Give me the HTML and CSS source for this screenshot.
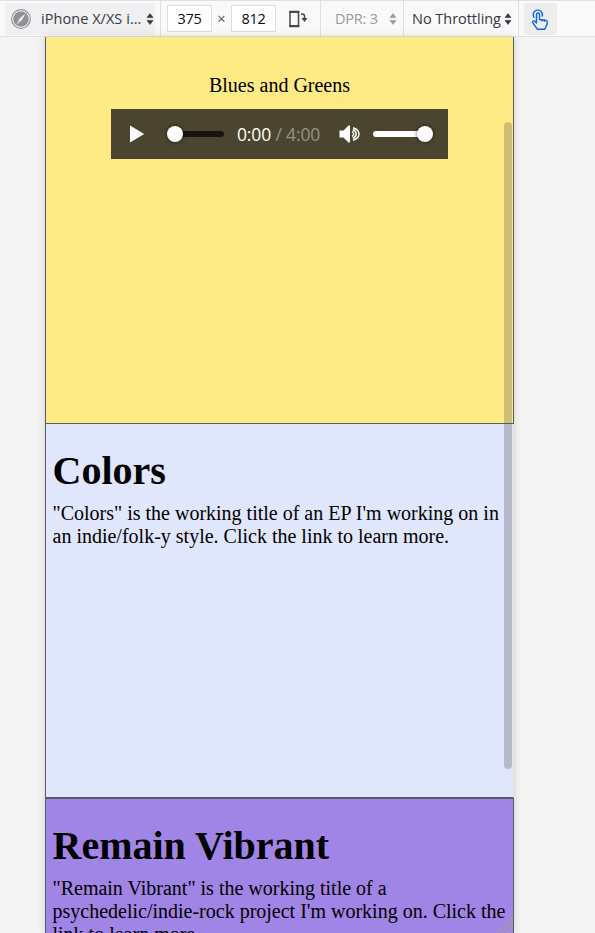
FILE: index.html
```html
<!DOCTYPE html>
<html lang="en">
<head>
<meta charset="utf-8">
<title>Responsive view</title>
<link rel="stylesheet" href="styles.css">
</head>
<body>
<header class="toolbar">
  <div class="cell device">
    <button class="device-button">
      <svg class="compass" width="20" height="20" viewBox="0 0 20 20"><circle cx="10" cy="10" r="9.3" fill="#fff" stroke="#909095" stroke-width="1.200"/><circle cx="10" cy="10" r="7.800" fill="#909095"/><path d="M14.500 4.500 11 11 5.500 15.500 9 9Z" fill="#eee"/></svg>
      <span class="device-name">iPhone X/XS i...</span>
      <svg class="arrows" width="8" height="12" viewBox="0 0 8 12"><path d="M4 .6 7 4.600H1ZM4 11.400 1 7.400h6Z" fill="#38383d" stroke="#38383d" stroke-width=".6" stroke-linejoin="round"/></svg>
    </button>
  </div>
  <div class="cell size">
    <span class="field">375</span>
    <span class="times">×</span>
    <span class="field">812</span>
    <svg class="rotate" width="20" height="20" viewBox="0 0 20 20"><path d="M2 2.500h8.500v15H2Z" fill="none" stroke="#48484c" stroke-width="1.500"/><path d="M1.300 3h10M1.300 17h10" stroke="#48484c" stroke-width="2"/><path d="M13 5h1.200q2.300 0 2.300 2.300V9" fill="none" stroke="#48484c" stroke-width="1.500"/><path d="M13.500 9h6l-3 4Z" fill="#48484c"/></svg>
  </div>
  <div class="cell dpr">
    <span class="dpr-text">DPR: 3</span>
    <svg class="arrows" width="8" height="12" viewBox="0 0 8 12"><path d="M4 .6 7 4.600H1ZM4 11.400 1 7.400h6Z" fill="#9a9a9c" stroke="#9a9a9c" stroke-width=".6" stroke-linejoin="round"/></svg>
  </div>
  <div class="cell throttle">
    <span class="throttle-text">No Throttling</span>
    <svg class="arrows" width="8" height="12" viewBox="0 0 8 12"><path d="M4 .6 7 4.600H1ZM4 11.400 1 7.400h6Z" fill="#38383d" stroke="#38383d" stroke-width=".6" stroke-linejoin="round"/></svg>
  </div>
  <button class="touch">
    <svg width="18" height="22" viewBox="0 0 18 22" fill="none" stroke="#0a68e8" stroke-width="1.400" stroke-linecap="round" stroke-linejoin="round"><path d="M5.500 13V5.500a1.500 1.500 0 0 1 3 0V10.500l6.300.6q1.400.2 1.400 1.700V15L13.800 20.300H6.500L1.500 13.300q.3-2 2.200-1.100L5.500 14M11 11v1M13.500 11.200v1"/><path d="M2.900 8.200A4.600 4.600 0 1 1 11.200 7"/></svg>
  </button>
</header>
<main class="viewport">
  <section class="card yellow">
    <p class="song">Blues and Greens</p>
    <div class="player">
      <svg class="play" width="16" height="18" viewBox="0 0 16 18"><path d="M1 .5v17L15.200 9Z" fill="#fff"/></svg>
      <div class="seek"><span class="knob"></span></div>
      <div class="time">0:00 <span class="total">/ 4:00</span></div>
      <svg class="speaker" width="22" height="20" viewBox="0 0 22 20"><path d="M.5 6.500h4L9.500 1.500h1.500v17H9.500L4.500 13.500h-4Z" fill="#fff"/><path d="M13 7.500q3.400 2.500 0 5M14 3.700q6 2 6 6.300t-6 6.300M13.800 5.700q3.400 1.300 3.400 4.300t-3.400 4.300" fill="none" stroke="#fff" stroke-width="1.500"/></svg>
      <div class="volume"><span class="knob"></span></div>
    </div>
  </section>
  <section class="card blue">
    <h1>Colors</h1>
    <p>"Colors" is the working title of an EP I'm working on in<br>an indie/folk-y style. Click the link to learn more.</p>
  </section>
  <section class="card purple">
    <h1>Remain Vibrant</h1>
    <p>"Remain Vibrant" is the working title of a<br>psychedelic/indie-rock project I'm working on. Click the<br>link to learn more.</p>
  </section>
  <div class="scrollbar"></div>
  <svg class="grip" width="16" height="16" viewBox="0 0 16 16" stroke="#a59ca8" stroke-width="1.200"><path d="M0 16 16 0M5 16 16 5M10 16l6-6"/></svg>
</main>
</body>
</html>
```
FILE: styles.css
```css
* { box-sizing: border-box; }
body {
  margin: 0;
  height: 933px;
  overflow: hidden;
  background: #f4f4f4;
  font-family: "Liberation Serif", serif;
}
button { border: 0; padding: 0; font: inherit; color: inherit; }
svg { display: block; flex: none; }
h1, p { margin: 0; white-space: nowrap; }
.toolbar {
  display: flex;
  height: 37px;
  background: #f9f9fa;
  border-top: 1px solid #e0e0e2;
  border-bottom: 1px solid #e0e0e2;
  font: 14.5px "Open Sans", sans-serif;
  color: #38383d;
  white-space: nowrap;
}
.cell {
  display: flex;
  align-items: center;
  border-right: 1px solid #e0e0e2;
}
.device { width: 161px; padding-left: 5px; }
.device-button {
  display: flex;
  align-items: center;
  width: 150px;
  height: 32px;
  padding-left: 6px;
  border-radius: 3px;
  background: #f0f0f3;
}
.device-name { width: 105px; margin-left: 10px; text-align: left; letter-spacing: .05px; }
.size { width: 160px; padding-left: 6px; }
.field {
  width: 45px;
  height: 27px;
  border: 1px solid #dddde0;
  background: #fff;
  color: #0c0c0d;
  line-height: 26px;
  text-align: center;
  letter-spacing: -.3px;
}
.times { width: 19px; text-align: center; color: #4a5568; }
.rotate { margin-left: 12px; }
.dpr { width: 83px; padding-left: 14px; color: #9a9a9c; }
.dpr-text { width: 54px; letter-spacing: -.2px; }
.throttle { width: 115px; padding-left: 8px; }
.throttle-text { width: 92px; letter-spacing: -.03px; }
.touch {
  display: flex;
  align-items: center;
  justify-content: center;
  width: 33px;
  height: 32px;
  margin: 2px 0 0 5px;
  padding: 2px 2px 0 0;
  border-radius: 3px;
  background: #ededf0;
}
.viewport {
  position: relative;
  width: 469px;
  height: 896px;
  margin-left: 45px;
  overflow: hidden;
  box-shadow: 0 0 8px rgba(0, 0, 0, .15);
  font-size: 20px;
  line-height: 23px;
  color: #000;
}
.card { border: 1px solid #5a5d60; }
.card h1 { font-size: 40px; line-height: 46px; }
.yellow {
  height: 387px;
  padding-top: 37px;
  border-top: 0;
  background: #ffeb85;
}
.song { text-align: center; }
.player {
  display: flex;
  align-items: center;
  width: 337px;
  height: 50px;
  margin: 12px auto 0;
  padding-left: 18px;
  background: #4b4530;
}
.seek, .volume {
  position: relative;
  height: 6px;
  border-radius: 3px;
}
.seek { width: 53px; margin-left: 26px; background: #15140e; }
.volume { width: 58px; margin-left: 12px; background: #fff; }
.knob {
  position: absolute;
  top: -5px;
  width: 16px;
  height: 16px;
  border-radius: 50%;
  background: #fff;
  box-shadow: 0 0 4px rgba(0, 0, 0, .6);
}
.seek .knob { left: -4px; }
.volume .knob { right: -2px; }
.time {
  width: 89px;
  margin-left: 13px;
  color: #fff;
  font: 17.5px "Open Sans", sans-serif;
  letter-spacing: -.15px;
  white-space: nowrap;
}
.total { color: #96928a; }
.speaker { margin-left: 13px; }
.blue {
  height: 374px;
  padding: 24px 0 0 6.5px;
  border-top: 0;
  border-right-color: #e0e0e2;
  background: #e0e6fc;
}
.blue p, .purple p { margin-top: 8px; }
.blue p { margin-top: 7.5px; }
.purple {
  height: 375px;
  padding: 24px 0 0 6.5px;
  background: #a084e6;
}
.purple p { margin-top: 7.5px; }
.scrollbar {
  position: absolute;
  top: 85px;
  right: 2px;
  width: 8px;
  height: 647px;
  border-radius: 4px;
  background: rgba(85, 85, 85, .3);
}
.grip { position: absolute; right: 1px; bottom: 0; }
```
